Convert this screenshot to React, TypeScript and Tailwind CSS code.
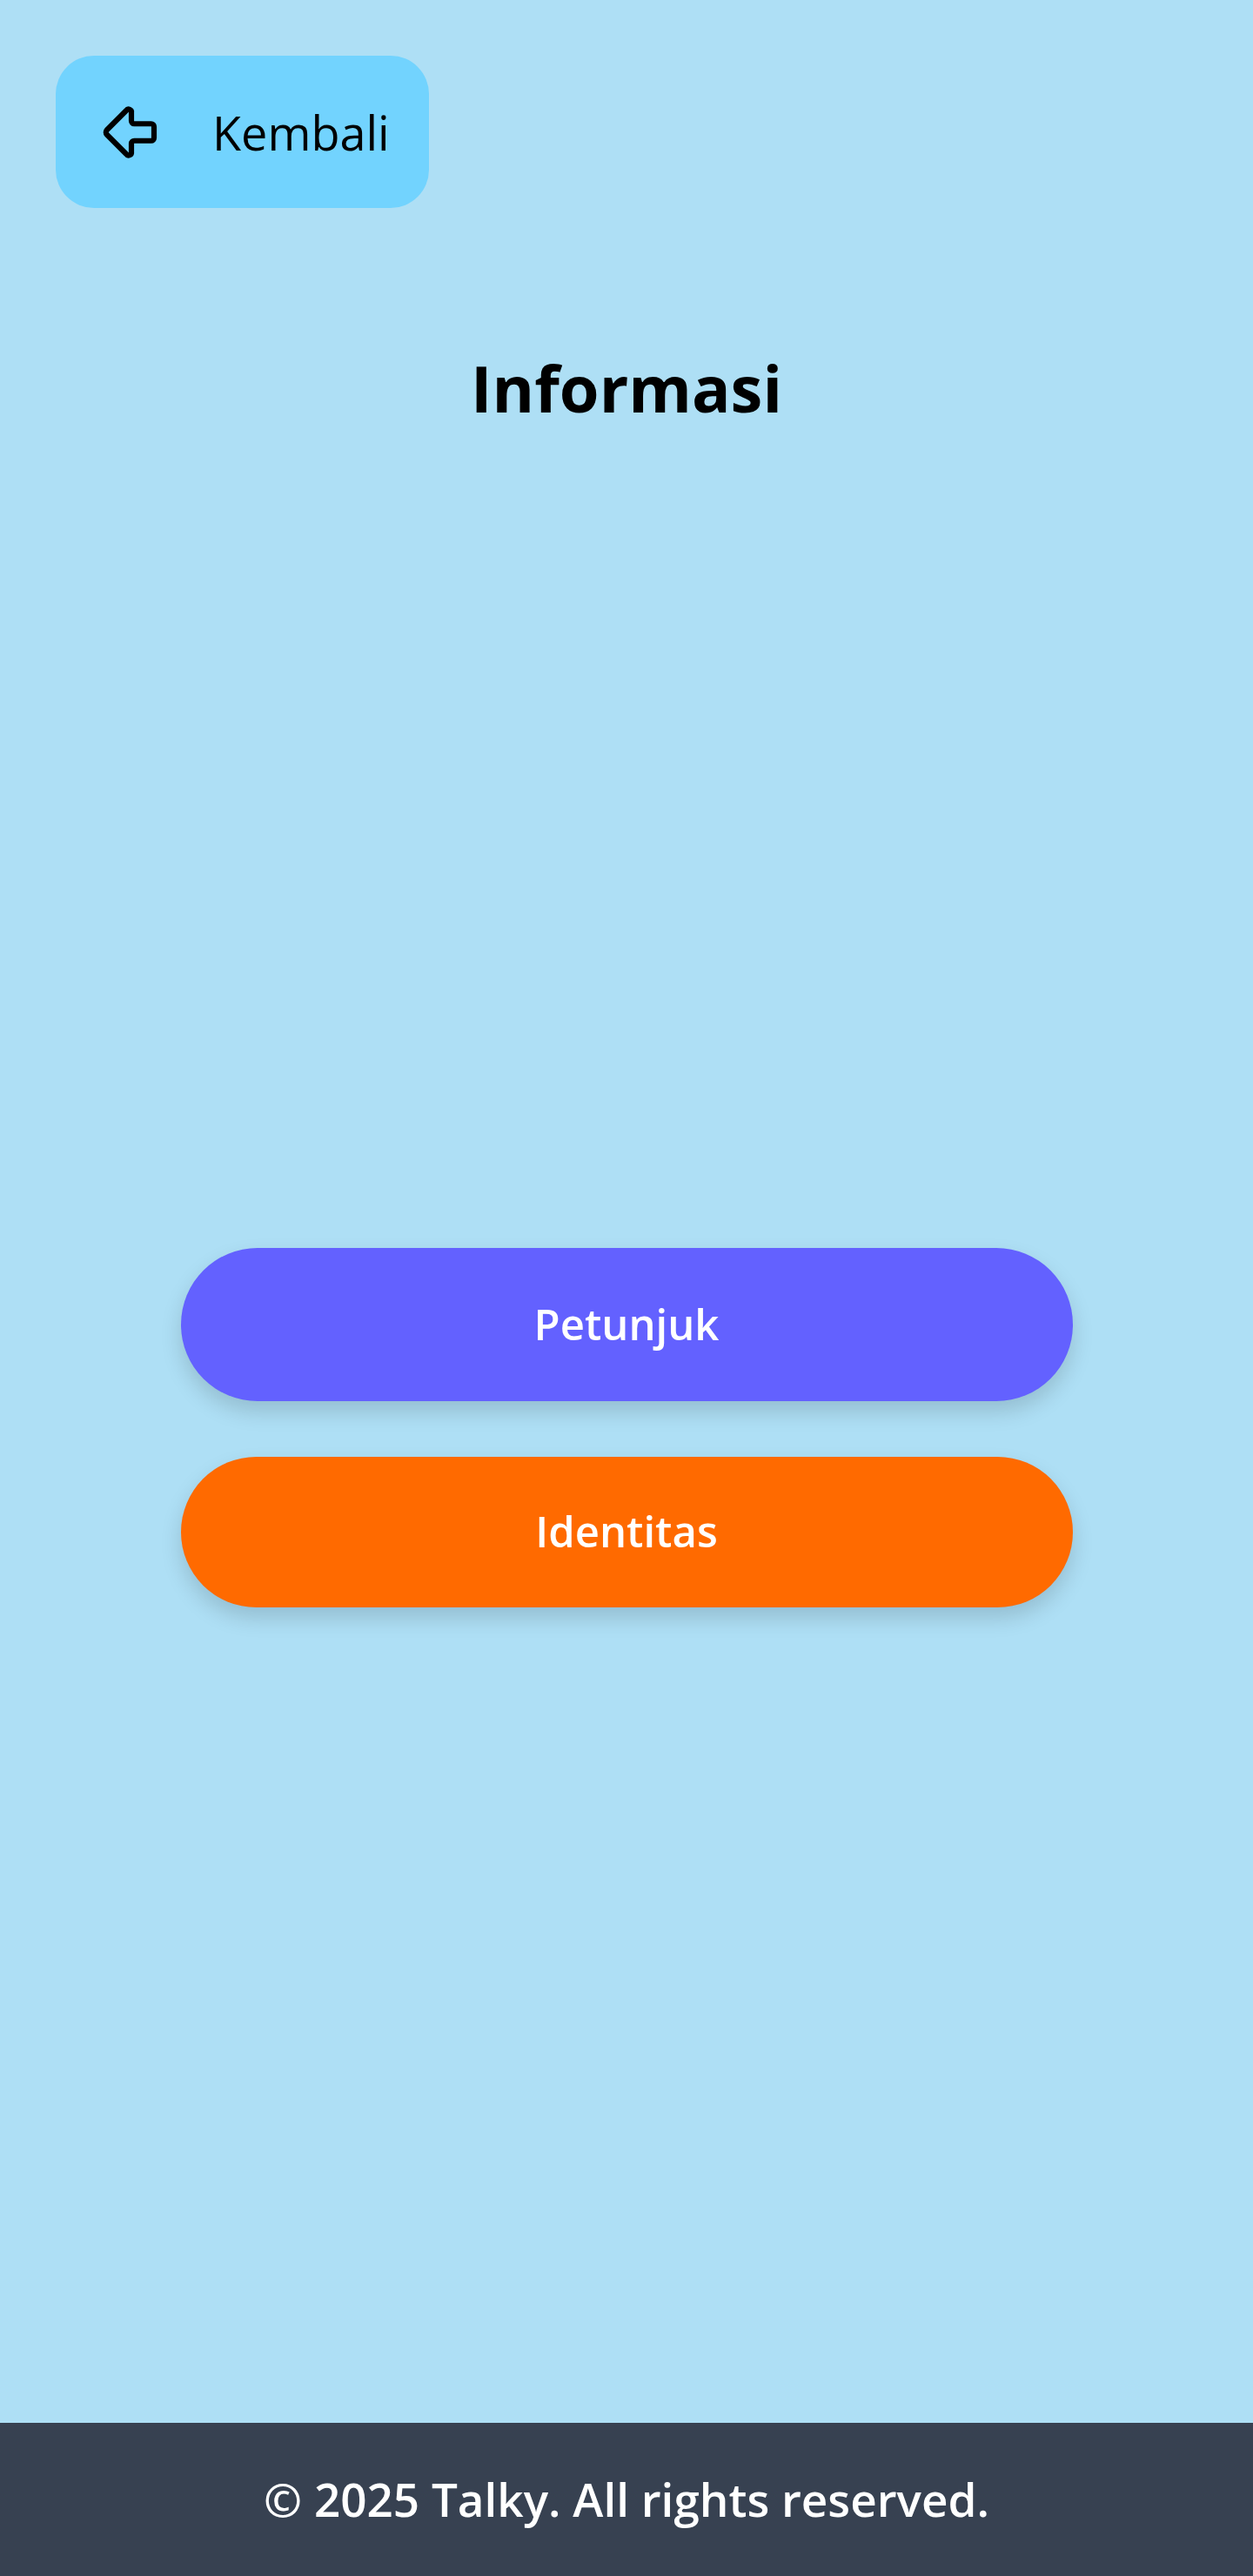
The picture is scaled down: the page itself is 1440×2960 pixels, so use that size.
import { ArrowBigLeft } from 'lucide-react';

const font = { fontFamily: '"Open Sans", "Noto Sans", sans-serif' };

export default function App() {
  return (
    <div
      className="flex flex-col min-h-[2960px] w-full bg-[#aedff5] text-black"
      style={font}
    >
      <main className="flex flex-col flex-1">
        <div className="pt-[64px] pl-[64px]">
          <button className="flex items-center gap-[54px] w-[429px] h-[175px] pl-[48px] rounded-[44px] bg-[#72d3fe]">
            <ArrowBigLeft size={78} strokeWidth={1.9} className="text-black" />
            <span className="text-[54px] font-medium leading-none">Kembali</span>
          </button>
        </div>

        <h1 className="mt-[157px] h-[100px] flex items-center justify-center text-[74px] font-bold leading-none">
          Informasi
        </h1>

        <div className="flex flex-1 flex-col items-center justify-center gap-[64px]">
          <button className="w-[1025px] h-[176px] rounded-full bg-[#6361ff] text-white text-[49px] font-semibold shadow-[0_12px_24px_rgba(0,0,0,0.15)]">
            Petunjuk
          </button>
          <button className="w-[1025px] h-[173px] rounded-full bg-[#ff6a00] text-white text-[49px] font-semibold shadow-[0_12px_24px_rgba(0,0,0,0.15)]">
            Identitas
          </button>
        </div>
      </main>

      <footer className="h-[176px] flex items-center justify-center bg-[#374151] text-white text-[53px] font-semibold">
        © 2025 Talky. All rights reserved.
      </footer>
    </div>
  );
}
